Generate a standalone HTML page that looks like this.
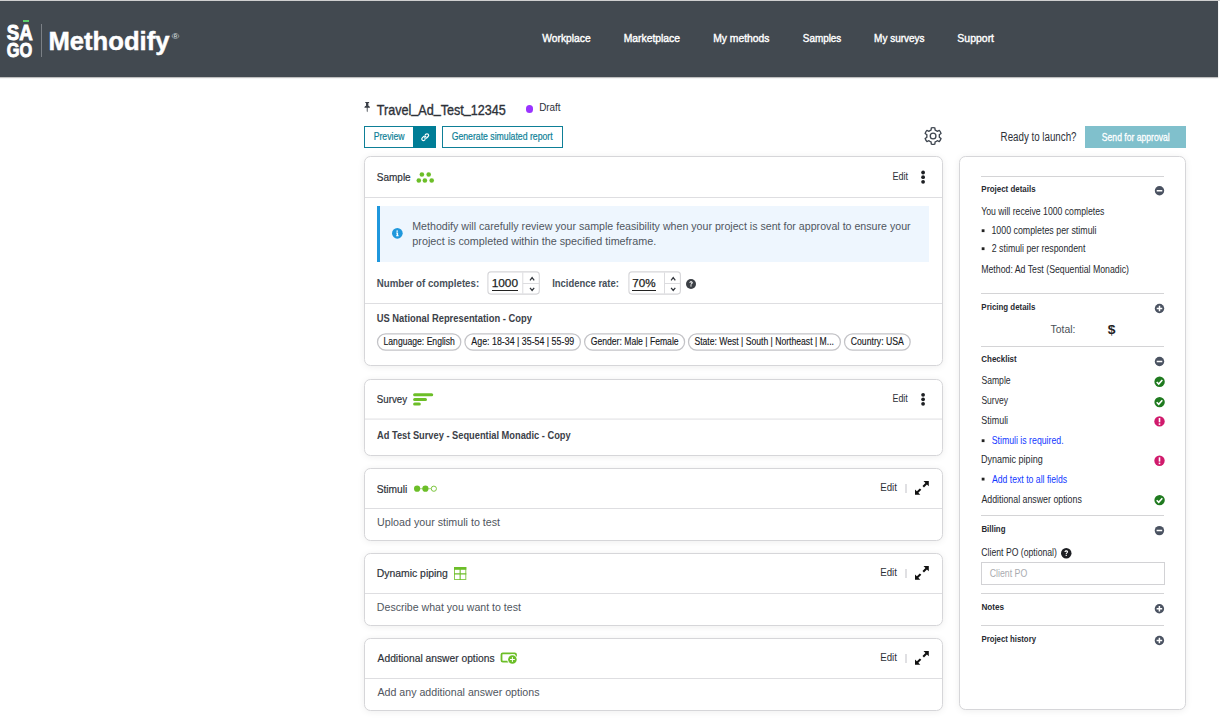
<!DOCTYPE html>
<html lang="en"><head><meta charset="utf-8"><title>Methodify - Travel_Ad_Test_12345</title>
<style>

*{box-sizing:border-box;margin:0;padding:0}
html,body{width:1220px;height:719px;overflow:hidden;background:#fff}
body{position:relative;font-family:"Liberation Sans",sans-serif;-webkit-font-smoothing:antialiased}
.a{position:absolute}
.t{position:absolute;left:0;white-space:nowrap;line-height:1;transform-origin:0 0;display:inline-block;font-weight:400;font-family:inherit;text-decoration:none;background:none;border:0;cursor:default}
.hdr{left:0;top:1px;width:1218px;height:75.5px;background:#424950;box-shadow:0 1px 1px rgba(0,0,0,.25)}
.card{position:absolute;background:#fff;border:1px solid #d6d6d9;border-radius:6.5px;box-shadow:0 1px 7px rgba(0,0,0,.07)}
.hl{position:absolute;height:1px;background:#dedee1}
.sl{position:absolute;height:1px;background:#d4d4d6;left:981px;width:183px}
.btn{position:absolute;border:1px solid #0e7f97;background:#fff}
svg{position:absolute;overflow:visible}

</style></head>
<body>

<header>
<div class="a" style="left:0;top:0;width:1220px;height:1px;background:#cfcfcf"></div>
<div class="a hdr"></div>
<div class="a" style="left:22.6px;top:19.7px;width:6.6px;height:2.1px;background:#5bd16a"></div>
<div class="a" style="left:41.4px;top:24.3px;width:1px;height:32.6px;background:#7b8086"></div>
<span class="t" style="top:23.47px;font-size:21.3px;color:#fff;font-weight:700;-webkit-text-stroke:0.9px #fff;transform:translateX(6.67px) scaleX(0.8776);">SA</span>
<span class="t" style="top:39.62px;font-size:20.3px;color:#fff;font-weight:700;-webkit-text-stroke:0.9px #fff;transform:translateX(6.71px) scaleX(0.8088);">GO</span>
<span class="t" style="top:29.33px;font-size:25.6px;color:#fff;font-weight:700;-webkit-text-stroke:0.45px #fff;transform:translateX(48.46px) scaleX(1.0017);">Methodify</span>
<span class="t" style="top:32.63px;font-size:8px;color:#dfe1e3;transform:translateX(171.75px) scaleX(1.2495);">®</span>
<nav>
<a class="t" style="top:32.69px;font-size:11.0px;color:#fff;-webkit-text-stroke:0.4px #fff;transform:translateX(542.27px) scaleX(0.9339);">Workplace</a>
<a class="t" style="top:32.69px;font-size:11.0px;color:#fff;-webkit-text-stroke:0.4px #fff;transform:translateX(623.66px) scaleX(0.9402);">Marketplace</a>
<a class="t" style="top:32.69px;font-size:11.0px;color:#fff;-webkit-text-stroke:0.4px #fff;transform:translateX(713.19px) scaleX(0.9394);">My methods</a>
<a class="t" style="top:32.69px;font-size:11.0px;color:#fff;-webkit-text-stroke:0.4px #fff;transform:translateX(802.78px) scaleX(0.8997);">Samples</a>
<a class="t" style="top:32.69px;font-size:11.0px;color:#fff;-webkit-text-stroke:0.4px #fff;transform:translateX(874.09px) scaleX(0.9060);">My surveys</a>
<a class="t" style="top:32.69px;font-size:11.0px;color:#fff;-webkit-text-stroke:0.4px #fff;transform:translateX(957.31px) scaleX(0.9533);">Support</a>
</nav>
</header>
<main>
<section class="toolbar">
<svg style="left:363.8px;top:101.8px" width="6.4" height="10.2" viewBox="0 0 6 9" preserveAspectRatio="none"><path d="M1.2 0h3.6v.9h-.7v2.4c.9.3 1.5.9 1.5 1.8H3.4v3l-.4.9-.4-.9v-3H.4c0-.9.6-1.5 1.5-1.8V.9h-.7z" fill="#3a3f47"/></svg>
<div class="a" style="left:525.9px;top:105.2px;width:7.5px;height:7.5px;border-radius:50%;background:#9a33ff"></div>

<div class="btn" style="left:364px;top:126px;width:72px;height:22px"></div>
<div class="a" style="left:413.2px;top:126px;width:22.8px;height:22px;background:#007d96"></div>
<svg style="left:420.7px;top:132.8px" width="8.4" height="8.4" viewBox="0 0 10 10" fill="none" stroke="#fff" stroke-width="1.45" stroke-linecap="round"><path d="M4.3 5.7a1.9 1.9 0 0 0 2.7 0l1.5-1.5a1.9 1.9 0 0 0-2.7-2.7l-.6.6"/><path d="M5.7 4.3a1.9 1.9 0 0 0-2.7 0L1.5 5.8a1.9 1.9 0 0 0 2.7 2.7l.6-.6"/></svg>
<div class="btn" style="left:442px;top:126px;width:121px;height:22px"></div>
<svg style="left:924px;top:127px" width="18.2" height="18" viewBox="-9.1 -9 18.2 18" fill="none" stroke="#3f4650" stroke-width="1.35" stroke-linejoin="round"><circle cx="0" cy="0" r="2.85"/><path d="M2.05 -5.96L1.74 -8.17A8.35 8.35 0 0 0 -1.74 -8.17L-2.05 -5.96A6.3 6.3 0 0 0 -4.13 -4.75L-6.21 -5.59A8.35 8.35 0 0 0 -7.94 -2.58L-6.18 -1.20A6.3 6.3 0 0 0 -6.18 1.20L-7.94 2.58A8.35 8.35 0 0 0 -6.21 5.59L-4.13 4.75A6.3 6.3 0 0 0 -2.05 5.96L-1.74 8.17A8.35 8.35 0 0 0 1.74 8.17L2.05 5.96A6.3 6.3 0 0 0 4.13 4.75L6.21 5.59A8.35 8.35 0 0 0 7.94 2.58L6.18 1.20A6.3 6.3 0 0 0 6.18 -1.20L7.94 -2.58A8.35 8.35 0 0 0 6.21 -5.59L4.13 -4.75A6.3 6.3 0 0 0 2.05 -5.96Z"/></svg>

<div class="a" style="left:1085px;top:126.3px;width:101px;height:21.7px;background:#80c0cc"></div>
<h1 class="t" style="top:103.48px;font-size:14.2px;color:#2d3138;-webkit-text-stroke:0.35px #2d3138;transform:translateX(376.73px) scaleX(0.8873);">Travel<span style="position:relative;top:-2.9px">_</span>Ad<span style="position:relative;top:-2.9px">_</span>Test<span style="position:relative;top:-2.9px">_</span>12345</h1>
<span class="t" style="top:103.30px;font-size:10.4px;color:#2d3138;transform:translateX(539.17px) scaleX(0.9528);">Draft</span>
<button class="t" style="top:131.98px;font-size:10.3px;color:#0e7f97;-webkit-text-stroke:0.2px #0e7f97;transform:translateX(373.68px) scaleX(0.8411);">Preview</button>
<button class="t" style="top:131.98px;font-size:10.3px;color:#0e7f97;-webkit-text-stroke:0.2px #0e7f97;transform:translateX(451.63px) scaleX(0.8446);">Generate simulated report</button>
<span class="t" style="top:131.44px;font-size:12.0px;color:#2d3138;transform:translateX(1000.58px) scaleX(0.8132);">Ready to launch?</span>
<button class="t" style="top:132.29px;font-size:11px;color:#fff;-webkit-text-stroke:0.3px #fff;transform:translateX(1101.86px) scaleX(0.7807);">Send for approval</button>
</section>
<section class="sample">
<div class="card" style="left:364px;top:156px;width:578.6px;height:210px"></div>
<div class="hl" style="left:365px;top:197px;width:576.6px"></div>
<div class="hl" style="left:365px;top:302.7px;width:576.6px"></div>
<svg style="left:416px;top:172px" width="19" height="11" viewBox="416 172 19 11"><g fill="#6cbe28"><circle cx="421.9" cy="174.5" r="2.3"/><circle cx="428.7" cy="174.5" r="2.3"/><circle cx="418.8" cy="180.5" r="2.3"/><circle cx="424.9" cy="180.5" r="2.3"/><circle cx="431.7" cy="180.5" r="2.3"/></g></svg>
<svg style="left:920px;top:170px" width="6" height="14" viewBox="920 170 6 14"><g fill="#1d1f23"><circle cx="923.1" cy="172.5" r="1.9"/><circle cx="923.1" cy="177.2" r="1.9"/><circle cx="923.1" cy="181.8" r="1.9"/></g></svg>

<div class="a" style="left:377px;top:206px;width:552px;height:56px;background:#eef6fe;border-left:3px solid #1f97dd"></div>
<svg style="left:391.5px;top:228.4px" width="10.7" height="10.7" viewBox="0 0 20 20"><circle cx="10" cy="10" r="10" fill="#2098dc"/><path d="M8.300 4.500h2.800v2.600H8.300zM7.800 8.600h3.600v5h1v1.800H7.800v-1.800h1v-3.200h-1z" fill="#fff"/></svg>

<svg style="left:0;top:0" width="1220" height="719" viewBox="0 0 1220 719"><g fill="#fff" stroke="#c3c3c7" stroke-width="1.25"><rect x="377.5" y="333.9" width="83.3" height="16.2" rx="8.1"/><rect x="464.9" y="333.9" width="115.5" height="16.2" rx="8.1"/><rect x="584.6" y="333.9" width="100.0" height="16.2" rx="8.1"/><rect x="688.5" y="333.9" width="151.9" height="16.2" rx="8.1"/><rect x="844.5" y="333.9" width="65.7" height="16.2" rx="8.1"/></g><g fill="#fff" stroke="#d6d6d9" stroke-width="1.1"><rect x="487.9" y="271.9" width="51.4" height="22.2" rx="3"/><rect x="628.9" y="271.9" width="51.5" height="22.2" rx="3"/></g><g stroke="#dcdcdf" stroke-width="1"><path d="M522.8 272.4v21.2M522.8 283.5h16.2M664.5 272.4v21.2M664.5 283.5h15.6"/></g><g fill="none" stroke="#33373d" stroke-width="1.25"><path d="M530 280.3l2.1-2.700 2.100 2.700M530 287.800l2.100 2.700 2.100-2.700M671.1 280.300l2.100-2.700 2.100 2.700M671.100 287.800l2.100 2.700 2.100-2.700"/></g></svg>
<div class="a" style="left:491.8px;top:289.9px;width:26.4px;height:1px;background:#222"></div>

<div class="a" style="left:632.4px;top:289.9px;width:23.2px;height:1px;background:#222"></div>
<svg style="left:685.8px;top:278.9px" width="10" height="10" viewBox="0 0 20 20"><circle cx="10" cy="10" r="10" fill="#3b3f45"/><path d="M6.600 7.600c0-2 1.500-3.200 3.500-3.200s3.400 1.200 3.400 2.900c0 1.400-.8 2-1.600 2.600-.6.400-.9.700-.9 1.500H8.900c0-1.400.6-2 1.300-2.500.6-.4 1-.7 1-1.400 0-.6-.5-1-1.200-1s-1.300.4-1.300 1.200zM8.800 12.700h2.300V15H8.800z" fill="#fff"/></svg>
<h2 class="t" style="top:172.01px;font-size:11.8px;color:#2d3138;-webkit-text-stroke:0.2px #2d3138;transform:translateX(376.75px) scaleX(0.8485);">Sample</h2>
<a class="t" style="top:171.47px;font-size:10.9px;color:#2d3138;transform:translateX(892.43px) scaleX(0.8344);">Edit</a>
<p class="t" style="top:220.61px;font-size:11.8px;color:#50565e;transform:translateX(412.23px) scaleX(0.9017);">Methodify will carefully review your sample feasibility when your project is sent for approval to ensure your</p>
<p class="t" style="top:235.61px;font-size:11.8px;color:#50565e;transform:translateX(412.35px) scaleX(0.9136);">project is completed within the specified timeframe.</p>
<label class="t" style="top:277.28px;font-size:11.6px;color:#474f59;font-weight:700;transform:translateX(376.70px) scaleX(0.8369);">Number of completes:</label>
<span class="t" style="top:278.31px;font-size:11.8px;color:#1d1f23;-webkit-text-stroke:0.25px #1d1f23;transform:translateX(491.64px) scaleX(1.0080);">1000</span>
<label class="t" style="top:277.28px;font-size:11.6px;color:#474f59;font-weight:700;transform:translateX(552.15px) scaleX(0.8159);">Incidence rate:</label>
<span class="t" style="top:278.31px;font-size:11.8px;color:#1d1f23;-webkit-text-stroke:0.25px #1d1f23;transform:translateX(632.34px) scaleX(0.9879);">70%</span>
<span class="t" style="top:312.67px;font-size:10.9px;color:#3c4148;font-weight:700;transform:translateX(376.72px) scaleX(0.8603);">US National Representation - Copy</span>
<span class="t" style="top:336.47px;font-size:10.9px;color:#17191c;-webkit-text-stroke:0.15px #17191c;transform:translateX(383.55px) scaleX(0.7904);">Language: English</span>
<span class="t" style="top:336.47px;font-size:10.9px;color:#17191c;-webkit-text-stroke:0.15px #17191c;transform:translateX(471.34px) scaleX(0.8117);">Age: 18-34 | 35-54 | 55-99</span>
<span class="t" style="top:336.47px;font-size:10.9px;color:#17191c;-webkit-text-stroke:0.15px #17191c;transform:translateX(590.74px) scaleX(0.7902);">Gender: Male | Female</span>
<span class="t" style="top:336.47px;font-size:10.9px;color:#17191c;-webkit-text-stroke:0.15px #17191c;transform:translateX(694.41px) scaleX(0.7901);">State: West | South | Northeast | M...</span>
<span class="t" style="top:336.47px;font-size:10.9px;color:#17191c;-webkit-text-stroke:0.15px #17191c;transform:translateX(850.75px) scaleX(0.7975);">Country: USA</span>
</section>
<section class="survey">
<div class="card" style="left:364px;top:378.8px;width:578.6px;height:77.3px"></div>
<div class="hl" style="left:365px;top:418px;width:576.6px;transform:translateY(.57px)"></div>
<svg style="left:413px;top:393px" width="21" height="13" viewBox="413 393 21 13"><g fill="#6cbe28"><rect x="413.1" y="393.2" width="20.1" height="3.100" rx="1.500"/><rect x="413.1" y="397.9" width="13.9" height="3" rx="1.500"/><rect x="413.1" y="402.5" width="7.700" height="3.100" rx="1.500"/></g></svg>
<svg style="left:920px;top:391px" width="6" height="16" viewBox="920 391 6 16"><g fill="#1d1f23"><circle cx="923.1" cy="394.8" r="1.9"/><circle cx="923.1" cy="399.300" r="1.9"/><circle cx="923.1" cy="403.8" r="1.9"/></g></svg>
<h2 class="t" style="top:393.81px;font-size:11.8px;color:#2d3138;-webkit-text-stroke:0.2px #2d3138;transform:translateX(376.82px) scaleX(0.8248);">Survey</h2>
<a class="t" style="top:392.77px;font-size:10.9px;color:#2d3138;transform:translateX(892.52px) scaleX(0.8133);">Edit</a>
<span class="t" style="top:429.67px;font-size:10.9px;color:#3c4148;font-weight:700;transform:translateX(377.00px) scaleX(0.8518);">Ad Test Survey - Sequential Monadic - Copy</span>
</section>
<section class="stimuli">
<div class="card" style="left:364px;top:467.900px;width:578.6px;height:73.1px"></div>
<div class="hl" style="left:365px;top:507.800px;width:576.6px"></div>
<svg style="left:413px;top:485px" width="25" height="8" viewBox="413 485 25 8"><path d="M417 488.700h17" stroke="#8fd05a" stroke-width=".8"/><circle cx="417.1" cy="488.700" r="3.100" fill="#6cbe28"/><circle cx="425.4" cy="488.700" r="3.100" fill="#6cbe28"/><circle cx="433.85" cy="488.700" r="2.600" fill="#fff" stroke="#7cc63e" stroke-width="1"/></svg>
<div class="a" style="left:905.100px;top:484px;width:1.5px;height:9px;background:#e0e0e3"></div>
<svg style="left:915.4px;top:481.400px" width="13.8" height="13.8" viewBox="0 0 14 14"><g fill="#111"><path d="M8.600 0H14v5.400l-1.900-1.900-3 3L7.600 5l3-3z"/><path d="M5.400 14H0V8.600l1.900 1.900 3-3L6.400 9l-3 3z"/></g></svg>
<h2 class="t" style="top:483.71px;font-size:11.8px;color:#2d3138;-webkit-text-stroke:0.2px #2d3138;transform:translateX(376.68px) scaleX(0.8662);">Stimuli</h2>
<a class="t" style="top:481.67px;font-size:10.9px;color:#2d3138;transform:translateX(880.23px) scaleX(0.8915);">Edit</a>
<p class="t" style="top:516.00px;font-size:11.7px;color:#50565e;transform:translateX(377.06px) scaleX(0.9145);">Upload your stimuli to test</p>
</section>
<section class="dynamic-piping">
<div class="card" style="left:364px;top:552.700px;width:578.6px;height:73.2px"></div>
<div class="hl" style="left:365px;top:592.5px;width:576.6px"></div>
<svg style="left:454px;top:567px" width="12.300" height="13" viewBox="0 0 12.300 13"><rect x=".5" y=".5" width="11.300" height="12" fill="#fff" stroke="#8acb52" stroke-width="1"/><rect x="0" y="0" width="12.300" height="2.800" fill="#6cbe28"/><path d="M6.150 2v11M0 6.900h12.300" stroke="#6cbe28" stroke-width="1.100"/></svg>
<div class="a" style="left:905.100px;top:569px;width:1.5px;height:9px;background:#e0e0e3"></div>
<svg style="left:915.4px;top:566.400px" width="13.8" height="13.8" viewBox="0 0 14 14"><g fill="#111"><path d="M8.600 0H14v5.400l-1.900-1.900-3 3L7.600 5l3-3z"/><path d="M5.400 14H0V8.600l1.900 1.900 3-3L6.400 9l-3 3z"/></g></svg>
<h2 class="t" style="top:568.31px;font-size:11.8px;color:#2d3138;-webkit-text-stroke:0.2px #2d3138;transform:translateX(376.74px) scaleX(0.8819);">Dynamic piping</h2>
<a class="t" style="top:566.67px;font-size:10.9px;color:#2d3138;transform:translateX(880.23px) scaleX(0.8915);">Edit</a>
<p class="t" style="top:601.10px;font-size:11.7px;color:#50565e;transform:translateX(376.86px) scaleX(0.9048);">Describe what you want to test</p>
</section>
<section class="additional-options">
<div class="card" style="left:364px;top:637.800px;width:578.6px;height:73.2px"></div>
<div class="hl" style="left:365px;top:677.700px;width:576.6px"></div>
<svg style="left:500px;top:652px" width="18" height="13" viewBox="500 652 18 13"><rect x="501.500" y="653.300" width="14.500" height="8.300" rx="1.300" fill="none" stroke="#6cbe28" stroke-width="1.800"/><circle cx="512.4" cy="659.5" r="5.200" fill="#fff"/><circle cx="512.4" cy="659.5" r="4.300" fill="#6cbe28"/><path d="M512.4 657.100v4.800M510 659.500h4.800" stroke="#fff" stroke-width="1"/></svg>
<div class="a" style="left:905.100px;top:654px;width:1.5px;height:9px;background:#e0e0e3"></div>
<svg style="left:915.4px;top:651.400px" width="13.8" height="13.8" viewBox="0 0 14 14"><g fill="#111"><path d="M8.600 0H14v5.400l-1.900-1.900-3 3L7.600 5l3-3z"/><path d="M5.400 14H0V8.600l1.900 1.900 3-3L6.400 9l-3 3z"/></g></svg>
<h2 class="t" style="top:653.01px;font-size:11.8px;color:#2d3138;-webkit-text-stroke:0.2px #2d3138;transform:translateX(377.62px) scaleX(0.8696);">Additional answer options</h2>
<a class="t" style="top:651.67px;font-size:10.9px;color:#2d3138;transform:translateX(880.23px) scaleX(0.8915);">Edit</a>
<p class="t" style="top:685.90px;font-size:11.7px;color:#50565e;transform:translateX(377.43px) scaleX(0.9103);">Add any additional answer options</p>
</section>
</main>
<aside>
<div class="card" style="left:959px;top:155.500px;width:227px;height:554.5px"></div>
<div class="sl" style="top:175.900px"></div>
<div class="sl" style="top:293px"></div>
<div class="sl" style="top:345.800px"></div>
<div class="sl" style="top:514.5px"></div>
<div class="sl" style="top:593.2px"></div>
<div class="sl" style="top:624.900px"></div>
<svg style="left:0;top:0" width="1220" height="719" viewBox="0 0 1220 719">
 <!-- minus icons -->
 <g fill="#4a5261"><circle cx="1159.5" cy="190.800" r="4.700"/><circle cx="1159.5" cy="361.500" r="4.700"/><circle cx="1159.400" cy="530.600" r="4.700"/><circle cx="1159.5" cy="308.5" r="4.700"/><circle cx="1159.400" cy="608.800" r="4.700"/><circle cx="1159.400" cy="640.5" r="4.700"/></g>
 <g stroke="#fff" stroke-width="1.500" fill="none"><path d="M1156.700 190.800h5.600M1156.700 361.500h5.600M1156.600 530.600h5.600"/><path d="M1156.700 308.5h5.600M1159.500 305.700v5.600M1156.600 608.800h5.600M1159.400 606v5.600M1156.600 640.5h5.600M1159.400 637.700v5.600"/></g>
 <!-- check icons -->
 <g fill="#1f7a1f"><circle cx="1159.600" cy="381.800" r="5.200"/><circle cx="1159.600" cy="402.100" r="5.200"/><circle cx="1159.600" cy="500.100" r="5.200"/></g>
 <g stroke="#fff" stroke-width="1.600" fill="none"><path d="M1156.700 382l2 2 3.600-4"/><path d="M1156.700 402.300l2 2 3.600-4"/><path d="M1156.700 500.300l2 2 3.600-4"/></g>
 <!-- exclamation icons -->
 <g fill="#d01a6c"><circle cx="1159.500" cy="421.400" r="5.200"/><circle cx="1159.500" cy="460.700" r="5.200"/></g>
 <g fill="#fff"><rect x="1158.700" y="418" width="1.600" height="4.300"/><rect x="1158.700" y="423.300" width="1.600" height="1.600"/><rect x="1158.700" y="457.300" width="1.600" height="4.300"/><rect x="1158.700" y="462.600" width="1.600" height="1.600"/></g>
 <!-- bullets -->
 <g fill="#222"><rect x="981.700" y="229.300" width="2.800" height="2.800"/><rect x="981.700" y="247.300" width="2.800" height="2.800"/><rect x="981.700" y="439.300" width="2.800" height="2.800"/><rect x="981.700" y="477.700" width="2.800" height="2.800"/></g>
</svg>
<svg style="left:1061px;top:548.400px" width="10.500" height="10.500" viewBox="0 0 20 20"><circle cx="10" cy="10" r="10" fill="#1d1f23"/><path d="M6.600 7.600c0-2 1.500-3.200 3.500-3.200s3.400 1.200 3.400 2.900c0 1.400-.8 2-1.600 2.600-.6.400-.9.700-.9 1.500H8.900c0-1.400.6-2 1.300-2.500.6-.4 1-.7 1-1.400 0-.6-.5-1-1.200-1s-1.300.4-1.300 1.200zM8.800 12.700h2.300V15H8.800z" fill="#fff"/></svg>
<div class="a" style="left:981px;top:562.200px;width:183.500px;height:23px;border:1px solid #d2d2d5;background:#fff"></div>
<h3 class="t" style="top:184.32px;font-size:9.9px;color:#272a30;font-weight:700;transform:translateX(981.36px) scaleX(0.8035);">Project details</h3>
<span class="t" style="top:206.33px;font-size:10.6px;color:#272a30;transform:translateX(981.16px) scaleX(0.8192);">You will receive 1000 completes</span>
<span class="t" style="top:224.53px;font-size:10.6px;color:#272a30;transform:translateX(991.42px) scaleX(0.8338);">1000 completes per stimuli</span>
<span class="t" style="top:242.53px;font-size:10.6px;color:#272a30;transform:translateX(991.81px) scaleX(0.8271);">2 stimuli per respondent</span>
<span class="t" style="top:264.13px;font-size:10.6px;color:#272a30;transform:translateX(981.18px) scaleX(0.8263);">Method: Ad Test (Sequential Monadic)</span>
<h3 class="t" style="top:301.72px;font-size:9.9px;color:#272a30;font-weight:700;transform:translateX(981.36px) scaleX(0.8006);">Pricing details</h3>
<span class="t" style="top:324.32px;font-size:11.2px;color:#4a4f57;transform:translateX(1050.57px) scaleX(0.9306);">Total:</span>
<span class="t" style="top:324.02px;font-size:12.5px;color:#222;font-weight:700;transform:translateX(1107.69px) scaleX(1.1104);">$</span>
<h3 class="t" style="top:353.82px;font-size:9.9px;color:#272a30;font-weight:700;transform:translateX(981.31px) scaleX(0.8055);">Checklist</h3>
<span class="t" style="top:375.43px;font-size:10.6px;color:#272a30;transform:translateX(981.40px) scaleX(0.8124);">Sample</span>
<span class="t" style="top:395.23px;font-size:10.6px;color:#272a30;transform:translateX(981.38px) scaleX(0.8057);">Survey</span>
<span class="t" style="top:414.83px;font-size:10.6px;color:#272a30;transform:translateX(981.33px) scaleX(0.8422);">Stimuli</span>
<a class="t" style="top:434.63px;font-size:10.6px;color:#1238ff;transform:translateX(991.67px) scaleX(0.8260);">Stimuli is required.</a>
<span class="t" style="top:453.63px;font-size:10.6px;color:#272a30;transform:translateX(981.02px) scaleX(0.8512);">Dynamic piping</span>
<a class="t" style="top:473.63px;font-size:10.6px;color:#1238ff;transform:translateX(991.93px) scaleX(0.8188);">Add text to all fields</a>
<span class="t" style="top:493.73px;font-size:10.6px;color:#272a30;transform:translateX(981.42px) scaleX(0.8313);">Additional answer options</span>
<h3 class="t" style="top:523.72px;font-size:9.9px;color:#272a30;font-weight:700;transform:translateX(981.44px) scaleX(0.7962);">Billing</h3>
<label class="t" style="top:546.63px;font-size:10.6px;color:#272a30;transform:translateX(981.36px) scaleX(0.8171);">Client PO (optional)</label>
<span class="t" style="top:567.93px;font-size:10.6px;color:#a9abb0;transform:translateX(989.73px) scaleX(0.8274);">Client PO</span>
<h3 class="t" style="top:602.32px;font-size:9.9px;color:#272a30;font-weight:700;transform:translateX(981.41px) scaleX(0.8293);">Notes</h3>
<h3 class="t" style="top:634.42px;font-size:9.9px;color:#272a30;font-weight:700;transform:translateX(981.45px) scaleX(0.7888);">Project history</h3>
</aside>

</body></html>
